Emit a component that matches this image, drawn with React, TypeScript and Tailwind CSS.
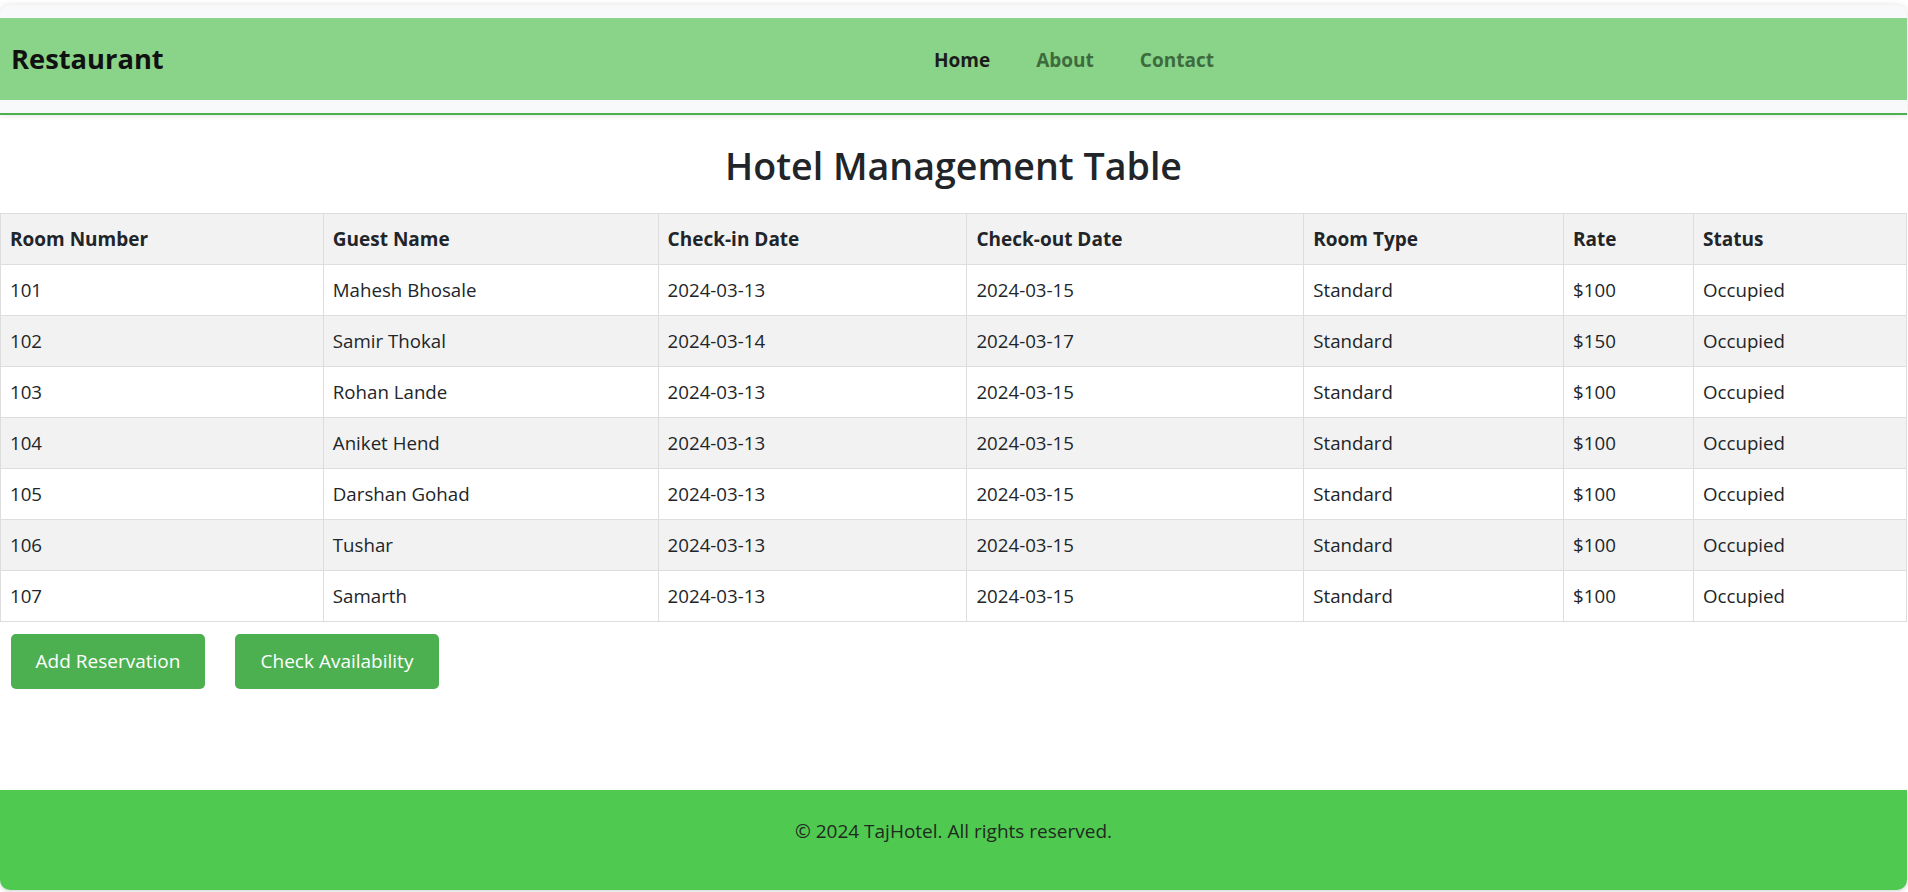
import React from 'react';

const rows = [
  { room: '101', guest: 'Mahesh Bhosale', checkIn: '2024-03-13', checkOut: '2024-03-15', type: 'Standard', rate: '$100', status: 'Occupied' },
  { room: '102', guest: 'Samir Thokal', checkIn: '2024-03-14', checkOut: '2024-03-17', type: 'Standard', rate: '$150', status: 'Occupied' },
  { room: '103', guest: 'Rohan Lande', checkIn: '2024-03-13', checkOut: '2024-03-15', type: 'Standard', rate: '$100', status: 'Occupied' },
  { room: '104', guest: 'Aniket Hend', checkIn: '2024-03-13', checkOut: '2024-03-15', type: 'Standard', rate: '$100', status: 'Occupied' },
  { room: '105', guest: 'Darshan Gohad', checkIn: '2024-03-13', checkOut: '2024-03-15', type: 'Standard', rate: '$100', status: 'Occupied' },
  { room: '106', guest: 'Tushar', checkIn: '2024-03-13', checkOut: '2024-03-15', type: 'Standard', rate: '$100', status: 'Occupied' },
  { room: '107', guest: 'Samarth', checkIn: '2024-03-13', checkOut: '2024-03-15', type: 'Standard', rate: '$100', status: 'Occupied' },
];

const columns = [
  { label: 'Room Number', width: 'w-[323px]' },
  { label: 'Guest Name', width: 'w-[335px]' },
  { label: 'Check-in Date', width: 'w-[309px]' },
  { label: 'Check-out Date', width: 'w-[337px]' },
  { label: 'Room Type', width: 'w-[260px]' },
  { label: 'Rate', width: 'w-[130px]' },
  { label: 'Status', width: 'w-[213px]' },
];

function Header() {
  return (
    <header className="rounded-t-[10px] bg-[#f8f9fa] pt-[13px] pb-[13px] border-b-2 border-[#4caf50] shadow-[0_0_6px_rgba(0,0,0,0.12)]">
      <nav className="flex h-[82px] items-center bg-[#89d489]">
        <div className="w-[934px] pl-[11px] text-[27.3px] font-bold text-[#111]">Restaurant</div>
        <ul className="flex items-center gap-[46px] pt-[2px] text-[19px] font-bold">
          <li className="text-[#1c1c1c]">Home</li>
          <li className="text-[#3e6b3e]">About</li>
          <li className="text-[#3e6b3e]">Contact</li>
        </ul>
      </nav>
    </header>
  );
}

function ReservationTable() {
  return (
    <table className="w-full border-collapse text-[18.7px] text-[#212529]">
      <thead>
        <tr className="h-[51px] bg-[#f2f2f2]">
          {columns.map((col) => (
            <th key={col.label} className={`${col.width} border border-[#dddddd] px-[9px] text-left text-[19px] font-bold`}>
              {col.label}
            </th>
          ))}
        </tr>
      </thead>
      <tbody>
        {rows.map((row, i) => (
          <tr key={row.room} className={i % 2 === 1 ? 'h-[51px] bg-[#f2f2f2]' : 'h-[51px] bg-white'}>
            <td className="border border-[#dddddd] px-[9px]">{row.room}</td>
            <td className="border border-[#dddddd] px-[9px]">{row.guest}</td>
            <td className="border border-[#dddddd] px-[9px]">{row.checkIn}</td>
            <td className="border border-[#dddddd] px-[9px]">{row.checkOut}</td>
            <td className="border border-[#dddddd] px-[9px]">{row.type}</td>
            <td className="border border-[#dddddd] px-[9px]">{row.rate}</td>
            <td className="border border-[#dddddd] px-[9px]">{row.status}</td>
          </tr>
        ))}
      </tbody>
    </table>
  );
}

export default function App() {
  return (
    <div className="min-h-[892px] w-[1907px] bg-white pt-[5px] font-['Open_Sans',sans-serif] text-[#212529]">
      <Header />
      <main className="flex flex-col">
        <h1 className="pt-[27px] pb-[23px] text-center text-[37.6px] font-semibold leading-[48px] text-[#212529]">
          Hotel Management Table
        </h1>
        <div className="h-[408px]">
          <ReservationTable />
        </div>
        <div className="flex gap-[30px] pl-[11px] pt-[13px]">
          <button className="flex h-[55px] w-[194px] items-center justify-center rounded-[5px] bg-[#4caf50] text-[19px] text-white">
            Add Reservation
          </button>
          <button className="flex h-[55px] w-[204px] items-center justify-center rounded-[5px] bg-[#4caf50] text-[19px] text-white">
            Check Availability
          </button>
        </div>
      </main>
      <footer className="mt-[101px] flex h-[100px] justify-center rounded-b-[10px] bg-[#4fc950] pt-[27px] text-[19px] text-[#1f2a1f] shadow-[0_2px_4px_rgba(0,0,0,0.15)]">
        © 2024 TajHotel. All rights reserved.
      </footer>
    </div>
  );
}
